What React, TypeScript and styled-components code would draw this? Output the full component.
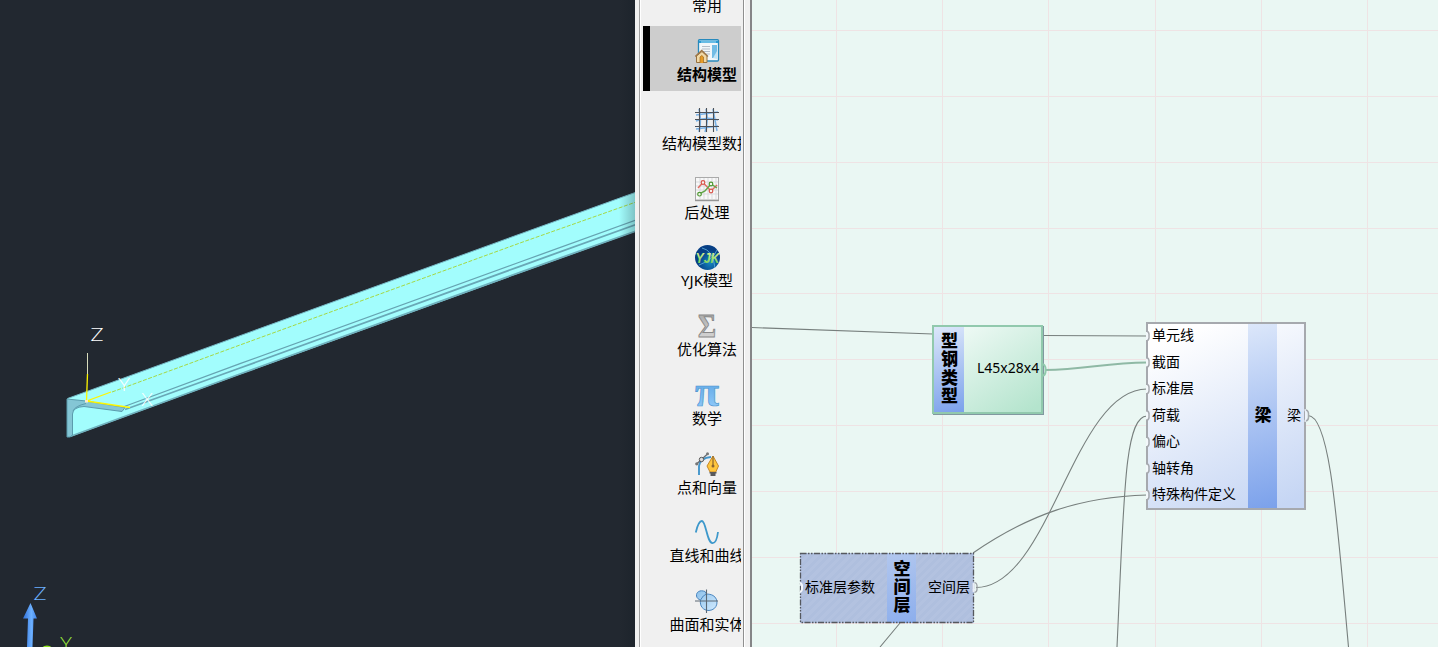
import React from 'react';
import styled, { createGlobalStyle, css } from 'styled-components';

const GlobalStyle = createGlobalStyle`
  *, *::before, *::after { box-sizing: border-box; }
  body {
    margin: 0;
    overflow: hidden;
    font-family: "Noto Sans", "Noto Sans CJK SC", sans-serif;
    color: #000;
  }
`;

const Window = styled.div`
  display: flex;
  width: 1438px;
  height: 647px;
  overflow: hidden;
`;

/* ---------- CAD viewport ---------- */

const Viewport = styled.section`
  flex: 0 0 635px;
  height: 647px;
  background: #222830;
`;

const AxisLabel = styled.text`
  font-family: Lato, sans-serif;
  font-weight: 300;
  font-size: 17px;
`;

function Model() {
  return (
    <svg width="635" height="647" viewBox="0 0 635 647" style={{ display: 'block' }}>
      <defs>
        <linearGradient id="edge" x1="0" x2="1">
          <stop offset="0" stopColor="#101820" stopOpacity="0" />
          <stop offset="1" stopColor="#101820" stopOpacity=".25" />
        </linearGradient>
        <linearGradient id="arrow" x1="0" x2="1">
          <stop offset="0" stopColor="#2f6fd8" />
          <stop offset=".6" stopColor="#6cb0ff" />
          <stop offset="1" stopColor="#3f82e8" />
        </linearGradient>
      </defs>
      <path d="M67.5 398.5 240 335.7 520 234 636 192.2V231.5L520 273 240 374.5 70 437H67z" fill="#a2fdfd" />
      <path d="M67.5 398.5 240 335.7 520 234 636 192.2" stroke="#76b9c6" fill="none" />
      <path d="M70 436.5 240 374 520 272.3 636 231" stroke="#6fb0bd" strokeWidth="1.8" fill="none" />
      <path d="M123 407 240 363.7 520 262 636 220" stroke="#66a4b2" strokeWidth="1.3" fill="none" />
      <path d="M125 409.5 240 368 520 266.3 636 224.5" stroke="#69a8b6" strokeWidth="1.8" fill="none" />
      <path
        d="M67 399 86 401 125 407.5 122 411.5 84 406.5Q73 407 72.5 414V435L70 437H67z"
        fill="#84c6d5"
        stroke="#5b9cad"
      />
      <path d="M73 411Q75 406 86 403.5" stroke="#5b9cad" fill="none" />
      <path d="M112 392 240 345 520 243 636 202" stroke="#a4d944" strokeDasharray="4 1.5" fill="none" />
      <path d="M87.5 353V375" stroke="#d8dcbc" fill="none" />
      <path d="M87.5 374 86.5 401 111 392M86.5 401 130 407.5" stroke="#fff600" strokeWidth="1.3" fill="none" />
      <rect x="85" y="400" width="3" height="2.5" fill="#ffe9c8" />
      <AxisLabel x="90.5" y="341" textLength="13" lengthAdjust="spacingAndGlyphs" fill="#fff">Z</AxisLabel>
      <AxisLabel x="118" y="391" textLength="12" lengthAdjust="spacingAndGlyphs" fill="#fff">Y</AxisLabel>
      <AxisLabel x="141" y="406" textLength="12" lengthAdjust="spacingAndGlyphs" fill="#fff">X</AxisLabel>
      <rect x="619" width="16" height="647" fill="url(#edge)" />

      <path d="M30.5 603 37 618.500H33.500L32.500 647H27L28 618.500H23z" fill="url(#arrow)" />
      <AxisLabel x="33.5" y="600" textLength="13" lengthAdjust="spacingAndGlyphs" fill="#6cb0ff">Z</AxisLabel>
      <AxisLabel x="60" y="649.500" textLength="12" lengthAdjust="spacingAndGlyphs" fill="#9dea3c">Y</AxisLabel>
      <ellipse cx="47" cy="648" rx="4.500" ry="2.500" fill="#8de020" />
    </svg>
  );
}

/* ---------- Category sidebar ---------- */

const Sidebar = styled.aside`
  display: flex;
  flex: 0 0 117px;
  height: 647px;
  padding: 0 6px 0 4px;
  background: #f0f0f0;
  border-right: 2px solid #858587;
`;

const CategoryPanel = styled.nav`
  display: flex;
  flex-direction: column;
  width: 105px;
  height: 647px;
  padding: 0 2px;
  overflow: hidden;
  border-left: 1px solid #a0a0a0;
  border-right: 1px solid #8f8f8f;
  box-shadow: inset 1px 0 #fff, 1px 0 #fff;
`;

const CategoryList = styled.div`
  display: flex;
  flex-direction: column;
  gap: 3.75px;
  width: 98px;
  margin: -42.75px 0 0 1px;
  overflow: hidden;
`;

const Category = styled.button<{ $active?: boolean }>`
  display: flex;
  flex: 0 0 65px;
  flex-direction: column;
  align-items: center;
  width: 128px;
  padding: 13px 7px 0 0;
  border: 0;
  border-left: 7px solid transparent;
  background: transparent;
  color: #000;
  font: 15px/22px "Noto Sans", "Noto Sans CJK SC", sans-serif;
  white-space: nowrap;
  ${(p) => p.$active && css`
    border-left-color: #000;
    background: #cdcdcd;
    font-weight: 700;
  `}
`;

const Glyph = styled.svg`
  flex: 0 0 24px;
  width: 24px;
  height: 24px;
  overflow: visible;
`;

const GlyphText = styled.text`
  text-anchor: middle;
`;

const icons: Record<string, React.ReactNode> = {
  model: (
    <>
      <rect x="3.500" y=".7" width="20" height="21.300" rx="1" fill="#f2f7fa" stroke="#2889bc" strokeWidth="1.300" />
      <path d="M4 1.500H23V4H4z" fill="#2b9ad3" />
      <path d="M6 3H21" stroke="#a5def7" />
      <path d="M17 6H22V19H17z" fill="#72bce5" />
      <path d="M18 19 22 12V20z" fill="#c1e4f6" />
      <path d="M7 7.500H15M7 10H15M8 12.500H15M11 15H15" stroke="#b4bdc8" />
      <path d="M1.500 17V23.500H12V17L7 12.500z" fill="#f2d9a6" stroke="#97713f" />
      <path d="M.3 17.500 6.700 11.500 13 17.500" stroke="#9d7647" strokeWidth="1.400" fill="none" />
      <path d="M5 24V18Q6.800 15 8.500 18V24" fill="#e69b27" stroke="#9d6a25" strokeWidth=".7" />
    </>
  ),
  mesh: (
    <g fill="none">
      <path d="M4 1Q7 12 4 24M11 1Q14 12 10 24M18 1 22 23M1 7 23 4M1 13Q12 8 23 12M1 21 23 18" stroke="#79b2e7" strokeWidth="1.500" />
      <path d="M4.500 0V24M11.500 0V24M18.500 0V24M0 4.500H24M0 11.500H24M0 18.500H24" stroke="#4c5158" strokeWidth="1.100" />
    </g>
  ),
  chart: (
    <>
      <rect x=".5" y=".5" width="23" height="22.500" fill="#f8f8f8" stroke="#aaa" />
      <path d="M1 5H23M1 9H23M1 13H23M1 17H23M5 1V22M9 1V22M13 1V22M17 1V22M21 1V22" stroke="#d9dadd" />
      <path d="M3 11 8 5.500 16 14 22 8" stroke="#e06b61" strokeWidth="1.500" fill="none" />
      <path d="M4 17 10 14 16 7 22 11" stroke="#66a64c" strokeWidth="1.500" fill="none" />
      <g fill="#f5f5ee" strokeWidth="1.200">
        <circle cx="8" cy="5.500" r="1.800" stroke="#d9534b" /><circle cx="16" cy="14" r="1.800" stroke="#d9534b" />
        <circle cx="4.500" cy="17.200" r="1.800" stroke="#4e9932" /><circle cx="16" cy="7" r="1.800" stroke="#4e9932" />
      </g>
      <path d="M0 23.700H24" stroke="#888" />
    </>
  ),
  yjk: (
    <>
      <defs>
        <radialGradient id="globe" cx=".6" cy=".7"><stop stopColor="#1686bf" /><stop offset=".65" stopColor="#0a5599" /><stop offset="1" stopColor="#073f85" /></radialGradient>
        <linearGradient id="leaf" x2="0" y2="1"><stop stopColor="#f4f9a0" /><stop offset="1" stopColor="#65cc51" /></linearGradient>
      </defs>
      <circle cx="12.500" cy="12.500" r="12.500" fill="url(#globe)" />
      <path d="M7 3Q18 5 20 23M4 20Q18 15 22 5" stroke="#65b6df" fill="none" strokeWidth=".8" />
      <GlyphText x="12.500" y="18" textLength="24" lengthAdjust="spacingAndGlyphs" fontFamily="Liberation Sans" fontWeight="700" fontStyle="italic" fontSize="15" fill="url(#leaf)">YJK</GlyphText>
    </>
  ),
  sigma: (
    <>
      <defs><linearGradient id="steel" x2="0" y2="1"><stop stopColor="#a2a2a2" /><stop offset="1" stopColor="#dedede" /></linearGradient></defs>
      <GlyphText x="12" y="22.800" fontFamily="Liberation Serif" fontWeight="700" fontSize="33" textLength="18" lengthAdjust="spacingAndGlyphs" fill="url(#steel)" stroke="#888" strokeWidth="1">Σ</GlyphText>
    </>
  ),
  pi: (
    <>
      <defs><linearGradient id="sky" x2="0" y2="1"><stop stopColor="#4695d9" /><stop offset="1" stopColor="#9bd2ff" /></linearGradient></defs>
      <GlyphText x="12" y="22.500" fontFamily="Liberation Serif" fontWeight="700" fontSize="45" textLength="24" lengthAdjust="spacingAndGlyphs" fill="url(#sky)" stroke="#4b95cf" strokeWidth=".7">π</GlyphText>
    </>
  ),
  pen: (
    <>
      <path d="M4 23V14Q5 6 16 5" stroke="#4395cb" strokeWidth="1.900" fill="none" />
      <path d="M1 12.500 13 1.500" stroke="#626970" strokeWidth="1.200" />
      <g fill="#777"><circle cx="1.800" cy="11.800" r="1.600" /><circle cx="12.500" cy="1.800" r="1.500" /></g>
      <circle cx="6.500" cy="7.500" r="2.200" fill="#ddd" stroke="#555" />
      <path d="M18 4 23.500 14 20.800 20H15L12 14z" fill="#ffc63d" stroke="#c5882a" />
      <path d="M18 4V13" stroke="#8d672c" strokeWidth="1.200" />
      <circle cx="18" cy="14" r="1.500" fill="#8a6432" />
      <path d="M14.500 20H21.500V21.500H20.500V24H15.500V21.500H14.500z" fill="#59595b" />
    </>
  ),
  curve: <path d="M.8 12.500C3 3 5 .8 7 1 11 1.500 12 23 17.500 23.200 20 23.300 22 20 23 12" stroke="#3d98cb" strokeWidth="1.800" fill="none" />,
  solid: (
    <>
      <defs><linearGradient id="water" x2="1" y2="1"><stop stopColor="#8dc1ea" /><stop offset="1" stopColor="#d1eaff" /></linearGradient></defs>
      <path d="M10 2.500C5 .5 1 3 1.500 7 1.800 9 3.500 10.500 5.500 11 4.500 17 8 21.500 14 21.500 23 21 24.500 10 18 6.500 16.500 5.500 13.500 5 11.500 5z" fill="url(#water)" stroke="#4b86bf" />
      <path d="M5.500 11Q8 6 11.500 5" stroke="#4b86bf" fill="none" />
      <path d="M11.500 .5V24M0 12H23" stroke="#5c6874" strokeWidth="1.100" />
    </>
  ),
};

const categories = [
  { label: '常用', icon: '' },
  { label: '结构模型', icon: 'model', active: true },
  { label: '结构模型数据', icon: 'mesh' },
  { label: '后处理', icon: 'chart' },
  { label: 'YJK模型', icon: 'yjk' },
  { label: '优化算法', icon: 'sigma' },
  { label: '数学', icon: 'pi' },
  { label: '点和向量', icon: 'pen' },
  { label: '直线和曲线', icon: 'curve' },
  { label: '曲面和实体', icon: 'solid' },
];

/* ---------- Node canvas ---------- */

const Canvas = styled.main`
  position: relative;
  flex: 1;
  height: 647px;
  overflow: hidden;
  background: #eaf7f3;
`;

const Drawing = styled.svg`
  position: absolute;
  inset: 0;
`;

const Node = styled.div<{ $x: number; $y: number; $w: number; $h: number; $kind: 'type' | 'beam' | 'selected' }>`
  position: absolute;
  left: ${(p) => p.$x}px;
  top: ${(p) => p.$y}px;
  display: flex;
  width: ${(p) => p.$w}px;
  height: ${(p) => p.$h}px;
  font-size: 14px;
  line-height: 20px;
  white-space: nowrap;
  ${(p) => p.$kind === 'type' && css`
    border: 2px solid #91c9ad;
    background: linear-gradient(145deg, #f0faf6 10%, #b4e4cd 95%);
    box-shadow: 1px 1px #8198a0;
  `}
  ${(p) => p.$kind === 'beam' && css`
    border: 2px solid #a6a9ae;
    background: linear-gradient(155deg, #ffffff 10%, #c6d6f4 95%);
  `}
  ${(p) => p.$kind === 'selected' && css`
    background: repeating-linear-gradient(135deg, #b3c2e0 0 3px, #afbfde 3px 6px);
  `}
`;

const Ports = styled.div<{ $w: number; $left?: number }>`
  display: flex;
  flex: 0 0 ${(p) => p.$w}px;
  flex-direction: column;
  justify-content: center;
  gap: 6.5px;
  padding: 0 0 3px ${(p) => p.$left ?? 4}px;
`;

const Port = styled.span`
  height: 20px;
`;

const Title = styled.div<{ $w: number; $selected?: boolean }>`
  display: flex;
  flex: 0 0 ${(p) => p.$w}px;
  flex-direction: column;
  align-items: center;
  justify-content: center;
  padding: 0 0 2px 1px;
  background: ${(p) => (p.$selected
    ? 'linear-gradient(165deg, #b2c7ee, #8caeed)'
    : 'linear-gradient(165deg, #dce7fa, #7ba1eb)')};
  font-size: 17px;
  font-weight: 900;
  line-height: 18.3px;
`;

const Frame = styled.svg`
  position: absolute;
  inset: 0;
  overflow: visible;
`;

const verticals = [84.5, 190.5, 296.5, 403.5, 509.5, 615.5];
const horizontals = [30.5, 96.5, 162.5, 228.5, 293.5, 359.5, 425.5, 491.5, 557.5, 623.5];
const beamInputs = ['单元线', '截面', '标准层', '荷载', '偏心', '轴转角', '特殊构件定义'];

function Vertical({ text, width, selected }: { text: string; width: number; selected?: boolean }) {
  return (
    <Title $w={width} $selected={selected}>
      {[...text].map((c, i) => <span key={i}>{c}</span>)}
    </Title>
  );
}

function NodeCanvas() {
  return (
    <Canvas>
      <Drawing width="686" height="647">
        <g stroke="#efe3e4" strokeWidth="1">
          {verticals.map((x) => <path key={x} d={`M${x} 0V647`} />)}
          {horizontals.map((y) => <path key={y} d={`M0 ${y}H686`} />)}
        </g>
        <g transform="translate(-752 0)" fill="none" stroke="#777f7d" strokeWidth="1.1">
          <path d="M752 327.500 933 334M1043 335.500 1147 336" />
          <path d="M1045 370C1085 370 1105 362.500 1147 362.500" stroke="#8fb9a5" strokeWidth="2" />
          <path d="M976 587.500C1050 587.500 1073 389 1147 389" />
          <path d="M973 553C1030 514 1080 497 1147 495M900 623 880 647" />
          <path d="M1147 416C1124 416 1124 500 1117 647" />
          <path d="M1308 415.500C1330 415.500 1337 520 1348.500 647" />
        </g>
      </Drawing>

      <Node $x={180} $y={325} $w={111} $h={89} $kind="type">
        <Vertical text="型钢类型" width={30} />
        <Ports $w={76} $left={13}><Port>L45x28x4</Port></Ports>
      </Node>

      <Node $x={394} $y={322} $w={160} $h={188} $kind="beam">
        <Ports $w={100}>{beamInputs.map((name) => <Port key={name}>{name}</Port>)}</Ports>
        <Vertical text="梁" width={29} />
        <Ports $w={27} $left={10}><Port>梁</Port></Ports>
      </Node>

      <Node $x={48} $y={553} $w={174} $h={70} $kind="selected">
        <Ports $w={87} $left={5}><Port>标准层参数</Port></Ports>
        <Vertical text="空间层" width={29} selected />
        <Ports $w={58} $left={12}><Port>空间层</Port></Ports>
        <Frame width="174" height="70">
          <rect x=".5" y=".5" width="173" height="69" fill="none" stroke="#55585e" strokeWidth="1.300" strokeDasharray="6 1.500 1.500 1.500 1.500 1.500" />
        </Frame>
      </Node>

      <Drawing width="686" height="647">
        <g transform="translate(-752 0)" fill="none">
          {[336, 362.5, 389, 415.5, 442, 468.5, 495].map((y) => (
            <g key={y}>
              <path d={`M1147 ${y - 4}V${y + 4}`} stroke="#f3f8fb" strokeWidth="2" />
              <path d={`M1146.500 ${y - 5}Q1149.500 ${y - 4} 1149 ${y}Q1149.500 ${y + 4} 1146.500 ${y + 5}`} stroke="#a6a9ae" strokeWidth="1.500" />
            </g>
          ))}
          <path d="M1304.500 410Q1306 410 1306 412V419Q1306 421 1304.500 421" stroke="#edf3fb" strokeWidth="2" />
          <path d="M1306 410Q1309 411 1308.500 415.500Q1309 420 1306 421" stroke="#a6a9ae" strokeWidth="1.500" />
          <path d="M1043 364Q1046 366 1045.500 370Q1046 374 1043 376" stroke="#91c9ad" strokeWidth="2" />
          <path d="M800 583Q802.500 584 802 587.500Q802.500 591 800 592" stroke="#f4f7fb" strokeWidth="2" />
          <path d="M973.500 583V592" stroke="#e8edf8" strokeWidth="2" />
          <path d="M974.500 582.500Q977.500 583 977 587.500Q977.500 592 974.500 592.500" stroke="#989ba0" strokeWidth="1.200" />
        </g>
      </Drawing>
    </Canvas>
  );
}

export default function App() {
  return (
    <>
      <GlobalStyle />
      <Window>
        <Viewport><Model /></Viewport>
        <Sidebar>
          <CategoryPanel>
            <CategoryList>
              {categories.map((c) => (
                <Category key={c.label} $active={c.active}>
                  <Glyph viewBox="0 0 24 24">{icons[c.icon]}</Glyph>
                  <span>{c.label}</span>
                </Category>
              ))}
            </CategoryList>
          </CategoryPanel>
        </Sidebar>
        <NodeCanvas />
      </Window>
    </>
  );
}
